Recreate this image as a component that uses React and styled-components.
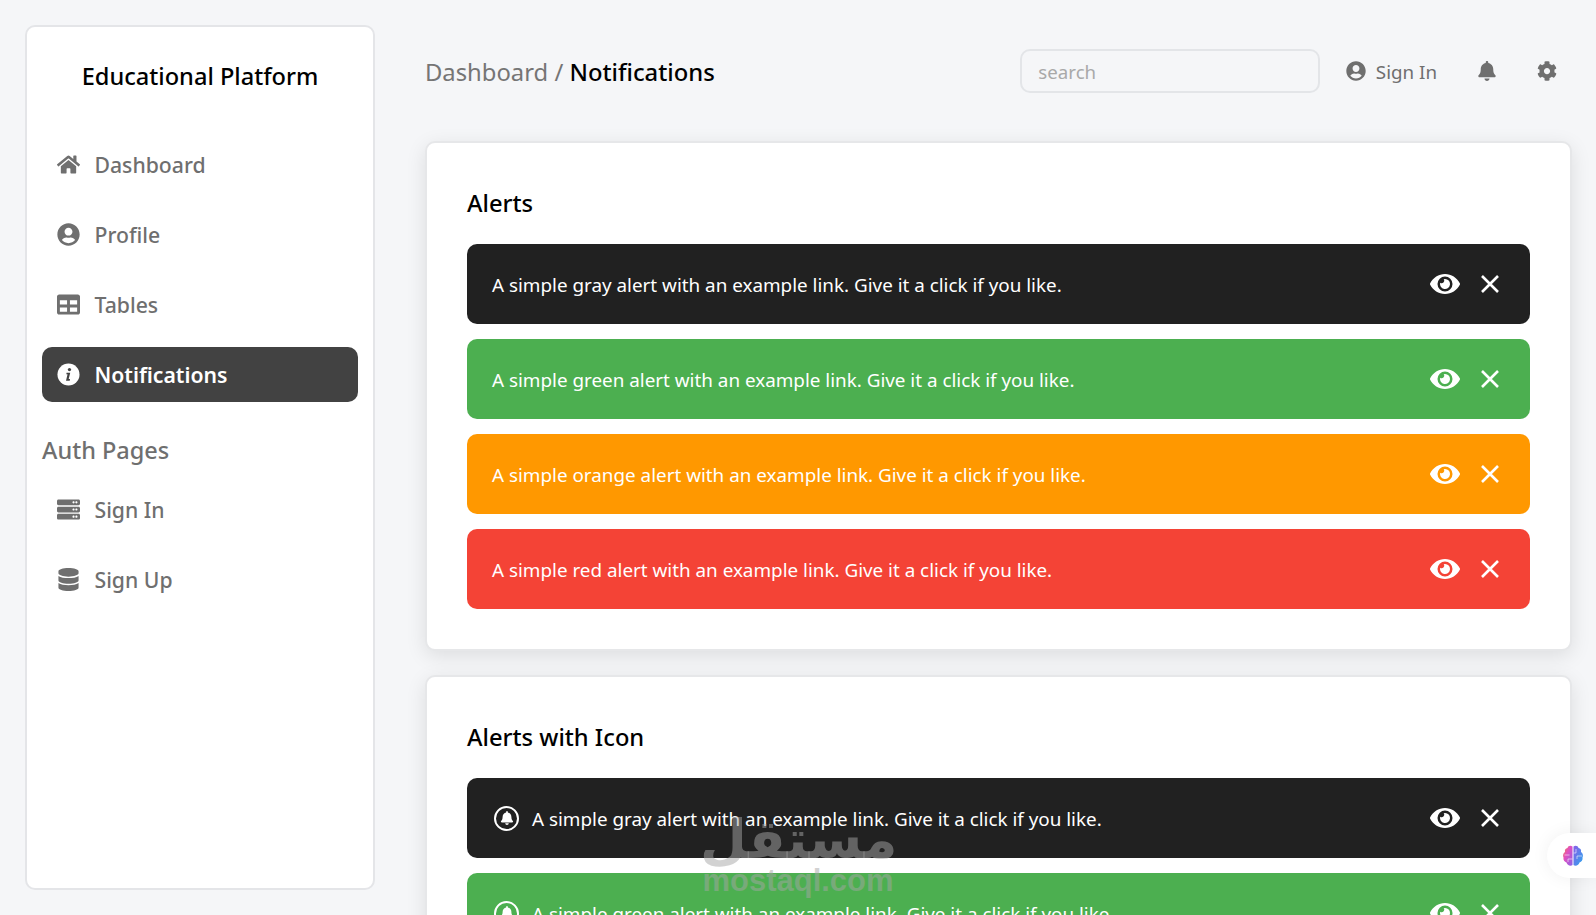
import React from 'react'
import styled, {createGlobalStyle} from 'styled-components'
import {FaHome, FaUserCircle, FaTable, FaServer, FaDatabase, FaBell, FaCog, FaEye} from 'react-icons/fa'

const GlobalStyle = createGlobalStyle`
  * { box-sizing: border-box; }
  html, body { margin: 0; height: 100%; overflow: hidden; }
  body {
    background: #f5f6f8;
    font-family: "Noto Sans", "Open Sans", sans-serif;
  }
`

const Page = styled.div`
  display: flex;
  gap: 50px;
  height: 915px;
  padding: 25px 24px 0 25px;
  overflow: hidden;
`

const Sidebar = styled.aside`
  flex: 0 0 350px;
  height: 865px;
  padding: 0 15px;
  background: #fff;
  border: 2px solid #e4e5e8;
  border-radius: 10px;
`

const Brand = styled.h1`
  margin: 0;
  padding-top: 29px;
  height: 110px;
  font-size: 23.6px;
  line-height: 40px;
  font-weight: 500;
  text-align: center;
  color: #000;
`

const NavItem = styled.a`
  display: flex;
  align-items: center;
  gap: 14.5px;
  height: 55px;
  margin-bottom: 15px;
  padding: 0 15px;
  border-radius: 10px;
  font-size: 21.2px;
  font-weight: ${p => (p.$active ? 600 : 500)};
  color: ${p => (p.$active ? '#fff' : '#6f6f6f')};
  background: ${p => (p.$active ? '#424242' : 'transparent')};
  svg { width: 23px; height: 23px; flex: none; }
`

const NavLabel = styled.span`
  margin-top: -1px;
`

const SectionLabel = styled.h2`
  margin: 0;
  padding-top: 15px;
  height: 65px;
  font-size: 23.5px;
  line-height: 36px;
  font-weight: 500;
  color: #6f6f6f;
`

const Main = styled.main`
  flex: 1;
  min-width: 0;
`

const Header = styled.header`
  display: flex;
  align-items: center;
  height: 92px;
  margin-bottom: 24px;
  padding-right: 15px;
`

const Crumbs = styled.div`
  margin-top: 2px;
  margin-right: auto;
  font-size: 23.8px;
  color: #757575;
  b { font-weight: 500; color: #000; }
`

const Search = styled.input`
  width: 300px;
  height: 44px;
  padding: 0 16px;
  background: transparent;
  border: 2px solid #e3e5e8;
  border-radius: 10px;
  font: 18.7px "Noto Sans", sans-serif;
  &::placeholder { color: #a9a9a9; }
`

const HeaderLink = styled.a`
  display: flex;
  align-items: center;
  gap: 10px;
  margin-left: 25.5px;
  font-size: 18.8px;
  color: #6f6f6f;
  svg { width: 20px; height: 20px; }
  span { margin-top: 2px; }
`

const HeaderIcon = styled.span`
  display: flex;
  margin-left: 40px;
  color: #6f6f6f;
  svg { width: 20px; height: 20px; }
`

const Card = styled.section`
  margin-bottom: 24px;
  padding: 40px;
  background: #fff;
  border: 2px solid #e6e7e9;
  border-radius: 10px;
  box-shadow: 0 5px 20px rgba(0, 0, 0, 0.1);
`

const CardTitle = styled.h3`
  margin: 0 0 21px;
  height: 40px;
  font-size: 23.7px;
  line-height: 40px;
  font-weight: 500;
  color: #000;
`

const AlertList = styled.div`
  display: flex;
  flex-direction: column;
  gap: 15px;
`

const AlertBox = styled.div`
  display: flex;
  align-items: center;
  height: 80px;
  padding: 0 31px 0 25px;
  border-radius: 10px;
  color: #fff;
  background: ${p => p.$color};
  font-size: 18.85px;
`

const BellRing = styled.span`
  display: flex;
  align-items: center;
  justify-content: center;
  width: 25px;
  height: 25px;
  margin: 0 13px 0 2px;
  border: 2px solid #fff;
  border-radius: 50%;
  svg { width: 14px; height: 14px; }
`

const AlertText = styled.span`
  flex: 1;
  margin-top: 2px;
`

const AlertActions = styled.span`
  display: flex;
  align-items: center;
  gap: 21px;
`

const EyeIcon = styled(FaEye)`
  width: 30px;
  height: 30px;
`

const Watermark = styled.div`
  position: absolute;
  left: 700px;
  top: 807px;
  width: 196px;
  text-align: center;
  color: rgba(165, 165, 165, 0.5);
  pointer-events: none;
`

const WatermarkArabic = styled.div`
  margin-bottom: -6px;
  font: bold 54px/66px "DejaVu Sans", sans-serif;
`

const WatermarkLatin = styled.div`
  font: bold 31px/28px "Liberation Sans", sans-serif;
`

const BrainTab = styled.div`
  position: absolute;
  right: 0;
  top: 833px;
  display: flex;
  align-items: center;
  width: 49px;
  height: 45px;
  padding-left: 14px;
  background: #fff;
  border-radius: 23px 0 0 23px;
  box-shadow: 0 0 18px rgba(0, 0, 0, 0.06);
`

const CloseIcon = () => (
  <svg width="18" height="18" viewBox="0 0 18 18">
    <path d="M1 1L17 17M17 1L1 17" stroke="currentColor" strokeWidth="2.6" fill="none" />
  </svg>
)

const InfoIcon = () => (
  <svg viewBox="0 0 24 24">
    <circle cx="12" cy="12" r="11.5" fill="currentColor" />
    <circle cx="13" cy="6.8" r="1.7" fill="#424242" />
    <path fill="#424242" d="M10 10.2H13.8L12.2 16.8H13.6L13.3 18.4H9.4L11 11.8H9.7Z" />
  </svg>
)

const BrainIcon = () => (
  <svg width="24" height="24" viewBox="0 0 24 24">
    <defs>
      <linearGradient id="lobeL" x1="0" y1="0" x2="1" y2="1">
        <stop offset="0" stopColor="#f5803e" />
        <stop offset="0.4" stopColor="#e14fc0" />
        <stop offset="1" stopColor="#8a63e8" />
      </linearGradient>
      <linearGradient id="lobeR" x1="0" y1="0" x2="1" y2="1">
        <stop offset="0" stopColor="#8a5ce8" />
        <stop offset="1" stopColor="#2aa8ee" />
      </linearGradient>
    </defs>
    <path fill="url(#lobeL)" d="M11.5 2.5C9.5 1 7 2 6.5 4 4.5 4.3 3.5 6 4 8 2.2 9 1.5 11.5 2.5 13.5 2 16 3.5 18 5.5 18.5 6 21 9.5 23 11.5 21Z" />
    <path fill="url(#lobeR)" d="M12.5 2.5C14.5 1 17 2 17.5 4 19.5 4.3 20.5 6 20 8 21.8 9 22.5 11.5 21.5 13.5 22 16 20.5 18 18.5 18.5 18 21 14.5 23 12.5 21Z" />
    <path fill="none" stroke="#fff" strokeWidth="0.7" opacity="0.8" d="M3.5 11H8.5M11.5 15H7V18M15 5V9H12.5M21 12H16V15" />
  </svg>
)

const navTop = [
  {label: 'Dashboard', icon: <FaHome />},
  {label: 'Profile', icon: <FaUserCircle />},
  {label: 'Tables', icon: <FaTable />},
  {label: 'Notifications', icon: <InfoIcon />, active: true},
]

const navAuth = [
  {label: 'Sign In', icon: <FaServer />},
  {label: 'Sign Up', icon: <FaDatabase />},
]

const alerts = [
  {name: 'gray', color: '#212121'},
  {name: 'green', color: '#4caf50'},
  {name: 'orange', color: '#ff9800'},
  {name: 'red', color: '#f44336'},
]

function Alert({name, color, withIcon}) {
  return (
    <AlertBox $color={color}>
      {withIcon && <BellRing><FaBell /></BellRing>}
      <AlertText>A simple {name} alert with an example link. Give it a click if you like.</AlertText>
      <AlertActions>
        <EyeIcon />
        <CloseIcon />
      </AlertActions>
    </AlertBox>
  )
}

export default function App() {
  return (
    <>
      <GlobalStyle />
      <Page>
        <Sidebar>
          <Brand>Educational Platform</Brand>
          {navTop.map(item => (
            <NavItem key={item.label} $active={item.active}>{item.icon}<NavLabel>{item.label}</NavLabel></NavItem>
          ))}
          <SectionLabel>Auth Pages</SectionLabel>
          {navAuth.map(item => (
            <NavItem key={item.label}>{item.icon}<NavLabel>{item.label}</NavLabel></NavItem>
          ))}
        </Sidebar>
        <Main>
          <Header>
            <Crumbs>Dashboard / <b>Notifications</b></Crumbs>
            <Search placeholder="search" />
            <HeaderLink><FaUserCircle /><span>Sign In</span></HeaderLink>
            <HeaderIcon><FaBell /></HeaderIcon>
            <HeaderIcon><FaCog /></HeaderIcon>
          </Header>
          <Card>
            <CardTitle>Alerts</CardTitle>
            <AlertList>
              {alerts.map(a => <Alert key={a.name} {...a} />)}
            </AlertList>
          </Card>
          <Card>
            <CardTitle>Alerts with Icon</CardTitle>
            <AlertList>
              {alerts.map(a => <Alert key={a.name} {...a} withIcon />)}
            </AlertList>
          </Card>
        </Main>
      </Page>
      <Watermark>
        <WatermarkArabic>مستقل</WatermarkArabic>
        <WatermarkLatin>mostaql.com</WatermarkLatin>
      </Watermark>
      <BrainTab><BrainIcon /></BrainTab>
    </>
  )
}
